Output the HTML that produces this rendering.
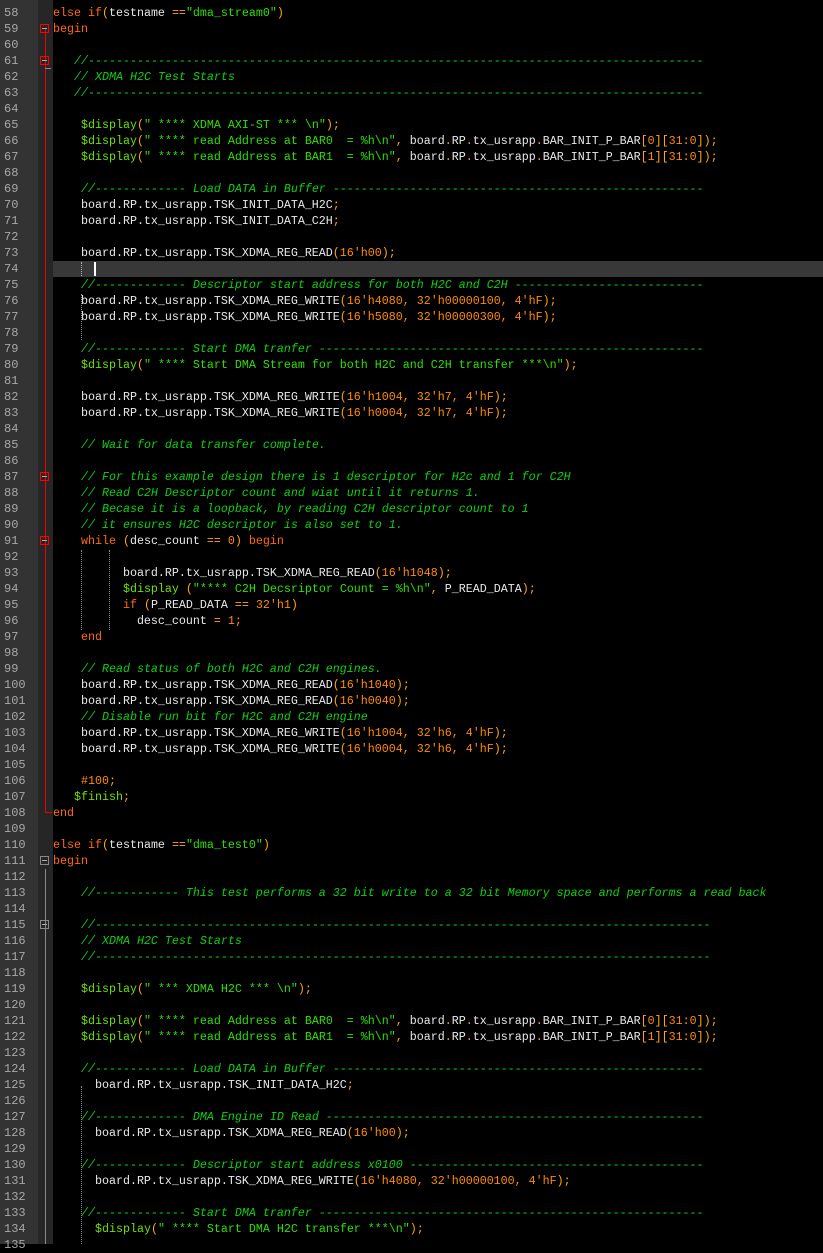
<!DOCTYPE html>
<html><head><meta charset="utf-8"><style>
body{margin:0;background:#000;width:823px;height:1244px;overflow:hidden;position:relative;font-family:"Liberation Mono","Courier New",monospace;font-size:11.67px}
.g1{position:absolute;left:0;top:0;width:38px;height:1244px;background:#333}
.g2{position:absolute;left:38px;top:0;width:15px;height:1244px;background:#262626}
.ln{position:absolute;left:4px;color:#a8a8a8;font-size:12px;height:16px;line-height:16px}
.l{position:absolute;left:53px;height:16px;line-height:16px;white-space:pre;color:#e8e8e8}
.k{color:#ff6a10}.o{color:#ffa800}.s{color:#30e000}.c{color:#10d010;font-style:italic}.n{color:#ff8c00}.f{color:#70e000}
.fill{display:inline-block;overflow:hidden;vertical-align:top;white-space:pre}
.hl{position:absolute;left:53px;top:261px;width:770px;height:16px;background:#383838}
.fb{position:absolute;width:9px;height:9px;border:1px solid #888;box-sizing:border-box}
.fb:after{content:"";position:absolute;left:1px;top:3px;width:5px;height:1px;background:#aaa}
.red{border-color:#f00}
</style></head><body>
<div class="g1"></div><div class="g2"></div>
<div class="hl"></div>
<div style="position:absolute;left:45px;top:29px;width:1px;height:784px;background:#e00"></div>
<div style="position:absolute;left:45px;top:812px;width:7px;height:1px;background:#e00"></div>
<div style="position:absolute;left:45px;top:68px;width:6px;height:1px;background:#888"></div>
<div style="position:absolute;left:45px;top:869px;width:1px;height:375px;background:#888"></div>
<div class="fb red" style="left:40px;top:24px"></div>
<div class="fb red" style="left:40px;top:56px"></div>
<div class="fb red" style="left:40px;top:472px"></div>
<div class="fb red" style="left:40px;top:536px"></div>
<div class="fb" style="left:40px;top:856px"></div>
<div class="fb" style="left:40px;top:920px"></div>
<div style="position:absolute;left:81px;top:262px;border-left:1px dotted #aaa;height:14px"></div>
<div style="position:absolute;left:94px;top:262px;width:2px;height:14px;background:#fff"></div>
<div style="position:absolute;left:81px;top:294px;border-left:1px dotted #888;height:46px"></div>
<div style="position:absolute;left:81px;top:550px;border-left:1px dotted #888;height:80px"></div>
<div style="position:absolute;left:109px;top:550px;border-left:1px dotted #888;height:80px"></div>
<div style="position:absolute;left:81px;top:1086px;border-left:1px dotted #888;height:158px"></div>
<div id="c"></div>
<div class="ln" style="top:5px">58</div><div class="l" style="top:5px"><span class="k">else if</span><span class="o">(</span>testname <span class="o">==</span><span class="s">"dma_stream0"</span><span class="o">)</span></div>
<div class="ln" style="top:21px">59</div><div class="l" style="top:21px"><span class="k">begin</span></div>
<div class="ln" style="top:37px">60</div>
<div class="ln" style="top:53px">61</div><div class="l" style="top:53px">   <span class="c fill" style="width:90ch">//----------------------------------------------------------------------------------------------------</span></div>
<div class="ln" style="top:69px">62</div><div class="l" style="top:69px">   <span class="c">// XDMA H2C Test Starts</span></div>
<div class="ln" style="top:85px">63</div><div class="l" style="top:85px">   <span class="c fill" style="width:90ch">//----------------------------------------------------------------------------------------------------</span></div>
<div class="ln" style="top:101px">64</div>
<div class="ln" style="top:117px">65</div><div class="l" style="top:117px">    <span class="f">$display</span><span class="o">(</span><span class="s">" **** XDMA AXI-ST *** \n"</span><span class="o">);</span></div>
<div class="ln" style="top:133px">66</div><div class="l" style="top:133px">    <span class="f">$display</span><span class="o">(</span><span class="s">" **** read Address at BAR0  = %h\n"</span><span class="o">,</span> board<span class="o">.</span>RP<span class="o">.</span>tx_usrapp<span class="o">.</span>BAR_INIT_P_BAR<span class="o">[</span><span class="n">0</span><span class="o">][</span><span class="n">31</span><span class="o">:</span><span class="n">0</span><span class="o">]);</span></div>
<div class="ln" style="top:149px">67</div><div class="l" style="top:149px">    <span class="f">$display</span><span class="o">(</span><span class="s">" **** read Address at BAR1  = %h\n"</span><span class="o">,</span> board<span class="o">.</span>RP<span class="o">.</span>tx_usrapp<span class="o">.</span>BAR_INIT_P_BAR<span class="o">[</span><span class="n">1</span><span class="o">][</span><span class="n">31</span><span class="o">:</span><span class="n">0</span><span class="o">]);</span></div>
<div class="ln" style="top:165px">68</div>
<div class="ln" style="top:181px">69</div><div class="l" style="top:181px">    <span class="c fill" style="width:89ch">//------------- Load DATA in Buffer ----------------------------------------------------------------------</span></div>
<div class="ln" style="top:197px">70</div><div class="l" style="top:197px">    board.RP.tx_usrapp.TSK_INIT_DATA_H2C<span class="o">;</span></div>
<div class="ln" style="top:213px">71</div><div class="l" style="top:213px">    board.RP.tx_usrapp.TSK_INIT_DATA_C2H<span class="o">;</span></div>
<div class="ln" style="top:229px">72</div>
<div class="ln" style="top:245px">73</div><div class="l" style="top:245px">    board.RP.tx_usrapp.TSK_XDMA_REG_READ<span class="o">(</span><span class="n">16'h00</span><span class="o">);</span></div>
<div class="ln" style="top:261px">74</div>
<div class="ln" style="top:277px">75</div><div class="l" style="top:277px">    <span class="c fill" style="width:89ch">//------------- Descriptor start address for both H2C and C2H ----------------------------------------------</span></div>
<div class="ln" style="top:293px">76</div><div class="l" style="top:293px">    board.RP.tx_usrapp.TSK_XDMA_REG_WRITE<span class="o">(</span><span class="n">16'h4080, 32'h00000100, 4'hF</span><span class="o">);</span></div>
<div class="ln" style="top:309px">77</div><div class="l" style="top:309px">    board.RP.tx_usrapp.TSK_XDMA_REG_WRITE<span class="o">(</span><span class="n">16'h5080, 32'h00000300, 4'hF</span><span class="o">);</span></div>
<div class="ln" style="top:325px">78</div>
<div class="ln" style="top:341px">79</div><div class="l" style="top:341px">    <span class="c fill" style="width:89ch">//------------- Start DMA tranfer ---------------------------------------------------------------------------</span></div>
<div class="ln" style="top:357px">80</div><div class="l" style="top:357px">    <span class="f">$display</span><span class="o">(</span><span class="s">" **** Start DMA Stream for both H2C and C2H transfer ***\n"</span><span class="o">);</span></div>
<div class="ln" style="top:373px">81</div>
<div class="ln" style="top:389px">82</div><div class="l" style="top:389px">    board.RP.tx_usrapp.TSK_XDMA_REG_WRITE<span class="o">(</span><span class="n">16'h1004, 32'h7, 4'hF</span><span class="o">);</span></div>
<div class="ln" style="top:405px">83</div><div class="l" style="top:405px">    board.RP.tx_usrapp.TSK_XDMA_REG_WRITE<span class="o">(</span><span class="n">16'h0004, 32'h7, 4'hF</span><span class="o">);</span></div>
<div class="ln" style="top:421px">84</div>
<div class="ln" style="top:437px">85</div><div class="l" style="top:437px">    <span class="c">// Wait for data transfer complete.</span></div>
<div class="ln" style="top:453px">86</div>
<div class="ln" style="top:469px">87</div><div class="l" style="top:469px">    <span class="c">// For this example design there is 1 descriptor for H2c and 1 for C2H</span></div>
<div class="ln" style="top:485px">88</div><div class="l" style="top:485px">    <span class="c">// Read C2H Descriptor count and wiat until it returns 1.</span></div>
<div class="ln" style="top:501px">89</div><div class="l" style="top:501px">    <span class="c">// Becase it is a loopback, by reading C2H descriptor count to 1</span></div>
<div class="ln" style="top:517px">90</div><div class="l" style="top:517px">    <span class="c">// it ensures H2C descriptor is also set to 1.</span></div>
<div class="ln" style="top:533px">91</div><div class="l" style="top:533px">    <span class="k">while</span> <span class="o">(</span>desc_count <span class="o">==</span> <span class="n">0</span><span class="o">)</span> <span class="k">begin</span></div>
<div class="ln" style="top:549px">92</div>
<div class="ln" style="top:565px">93</div><div class="l" style="top:565px">          board.RP.tx_usrapp.TSK_XDMA_REG_READ<span class="o">(</span><span class="n">16'h1048</span><span class="o">);</span></div>
<div class="ln" style="top:581px">94</div><div class="l" style="top:581px">          <span class="f">$display</span> <span class="o">(</span><span class="s">"**** C2H Decsriptor Count = %h\n"</span><span class="o">,</span> P_READ_DATA<span class="o">);</span></div>
<div class="ln" style="top:597px">95</div><div class="l" style="top:597px">          <span class="k">if</span> <span class="o">(</span>P_READ_DATA <span class="o">==</span> <span class="n">32'h1</span><span class="o">)</span></div>
<div class="ln" style="top:613px">96</div><div class="l" style="top:613px">            desc_count <span class="o">=</span> <span class="n">1</span><span class="o">;</span></div>
<div class="ln" style="top:629px">97</div><div class="l" style="top:629px">    <span class="k">end</span></div>
<div class="ln" style="top:645px">98</div>
<div class="ln" style="top:661px">99</div><div class="l" style="top:661px">    <span class="c">// Read status of both H2C and C2H engines.</span></div>
<div class="ln" style="top:677px">100</div><div class="l" style="top:677px">    board.RP.tx_usrapp.TSK_XDMA_REG_READ<span class="o">(</span><span class="n">16'h1040</span><span class="o">);</span></div>
<div class="ln" style="top:693px">101</div><div class="l" style="top:693px">    board.RP.tx_usrapp.TSK_XDMA_REG_READ<span class="o">(</span><span class="n">16'h0040</span><span class="o">);</span></div>
<div class="ln" style="top:709px">102</div><div class="l" style="top:709px">    <span class="c">// Disable run bit for H2C and C2H engine</span></div>
<div class="ln" style="top:725px">103</div><div class="l" style="top:725px">    board.RP.tx_usrapp.TSK_XDMA_REG_WRITE<span class="o">(</span><span class="n">16'h1004, 32'h6, 4'hF</span><span class="o">);</span></div>
<div class="ln" style="top:741px">104</div><div class="l" style="top:741px">    board.RP.tx_usrapp.TSK_XDMA_REG_WRITE<span class="o">(</span><span class="n">16'h0004, 32'h6, 4'hF</span><span class="o">);</span></div>
<div class="ln" style="top:757px">105</div>
<div class="ln" style="top:773px">106</div><div class="l" style="top:773px">    <span class="n">#100</span><span class="o">;</span></div>
<div class="ln" style="top:789px">107</div><div class="l" style="top:789px">   <span class="f">$finish</span><span class="o">;</span></div>
<div class="ln" style="top:805px">108</div><div class="l" style="top:805px"><span class="k">end</span></div>
<div class="ln" style="top:821px">109</div>
<div class="ln" style="top:837px">110</div><div class="l" style="top:837px"><span class="k">else if</span><span class="o">(</span>testname <span class="o">==</span><span class="s">"dma_test0"</span><span class="o">)</span></div>
<div class="ln" style="top:853px">111</div><div class="l" style="top:853px"><span class="k">begin</span></div>
<div class="ln" style="top:869px">112</div>
<div class="ln" style="top:885px">113</div><div class="l" style="top:885px">    <span class="c">//------------ This test performs a 32 bit write to a 32 bit Memory space and performs a read back</span></div>
<div class="ln" style="top:901px">114</div>
<div class="ln" style="top:917px">115</div><div class="l" style="top:917px">    <span class="c fill" style="width:90ch">//----------------------------------------------------------------------------------------------------</span></div>
<div class="ln" style="top:933px">116</div><div class="l" style="top:933px">    <span class="c">// XDMA H2C Test Starts</span></div>
<div class="ln" style="top:949px">117</div><div class="l" style="top:949px">    <span class="c fill" style="width:90ch">//----------------------------------------------------------------------------------------------------</span></div>
<div class="ln" style="top:965px">118</div>
<div class="ln" style="top:981px">119</div><div class="l" style="top:981px">    <span class="f">$display</span><span class="o">(</span><span class="s">" *** XDMA H2C *** \n"</span><span class="o">);</span></div>
<div class="ln" style="top:997px">120</div>
<div class="ln" style="top:1013px">121</div><div class="l" style="top:1013px">    <span class="f">$display</span><span class="o">(</span><span class="s">" **** read Address at BAR0  = %h\n"</span><span class="o">,</span> board<span class="o">.</span>RP<span class="o">.</span>tx_usrapp<span class="o">.</span>BAR_INIT_P_BAR<span class="o">[</span><span class="n">0</span><span class="o">][</span><span class="n">31</span><span class="o">:</span><span class="n">0</span><span class="o">]);</span></div>
<div class="ln" style="top:1029px">122</div><div class="l" style="top:1029px">    <span class="f">$display</span><span class="o">(</span><span class="s">" **** read Address at BAR1  = %h\n"</span><span class="o">,</span> board<span class="o">.</span>RP<span class="o">.</span>tx_usrapp<span class="o">.</span>BAR_INIT_P_BAR<span class="o">[</span><span class="n">1</span><span class="o">][</span><span class="n">31</span><span class="o">:</span><span class="n">0</span><span class="o">]);</span></div>
<div class="ln" style="top:1045px">123</div>
<div class="ln" style="top:1061px">124</div><div class="l" style="top:1061px">    <span class="c fill" style="width:89ch">//------------- Load DATA in Buffer ----------------------------------------------------------------------</span></div>
<div class="ln" style="top:1077px">125</div><div class="l" style="top:1077px">      board.RP.tx_usrapp.TSK_INIT_DATA_H2C<span class="o">;</span></div>
<div class="ln" style="top:1093px">126</div>
<div class="ln" style="top:1109px">127</div><div class="l" style="top:1109px">    <span class="c fill" style="width:89ch">//------------- DMA Engine ID Read -----------------------------------------------------------------------</span></div>
<div class="ln" style="top:1125px">128</div><div class="l" style="top:1125px">      board.RP.tx_usrapp.TSK_XDMA_REG_READ<span class="o">(</span><span class="n">16'h00</span><span class="o">);</span></div>
<div class="ln" style="top:1141px">129</div>
<div class="ln" style="top:1157px">130</div><div class="l" style="top:1157px">    <span class="c fill" style="width:89ch">//------------- Descriptor start address x0100 -----------------------------------------------------------</span></div>
<div class="ln" style="top:1173px">131</div><div class="l" style="top:1173px">      board.RP.tx_usrapp.TSK_XDMA_REG_WRITE<span class="o">(</span><span class="n">16'h4080, 32'h00000100, 4'hF</span><span class="o">);</span></div>
<div class="ln" style="top:1189px">132</div>
<div class="ln" style="top:1205px">133</div><div class="l" style="top:1205px">    <span class="c fill" style="width:89ch">//------------- Start DMA tranfer ---------------------------------------------------------------------------</span></div>
<div class="ln" style="top:1221px">134</div><div class="l" style="top:1221px">      <span class="f">$display</span><span class="o">(</span><span class="s">" **** Start DMA H2C transfer ***\n"</span><span class="o">);</span></div>
<div class="ln" style="top:1237px">135</div>
</body></html>
